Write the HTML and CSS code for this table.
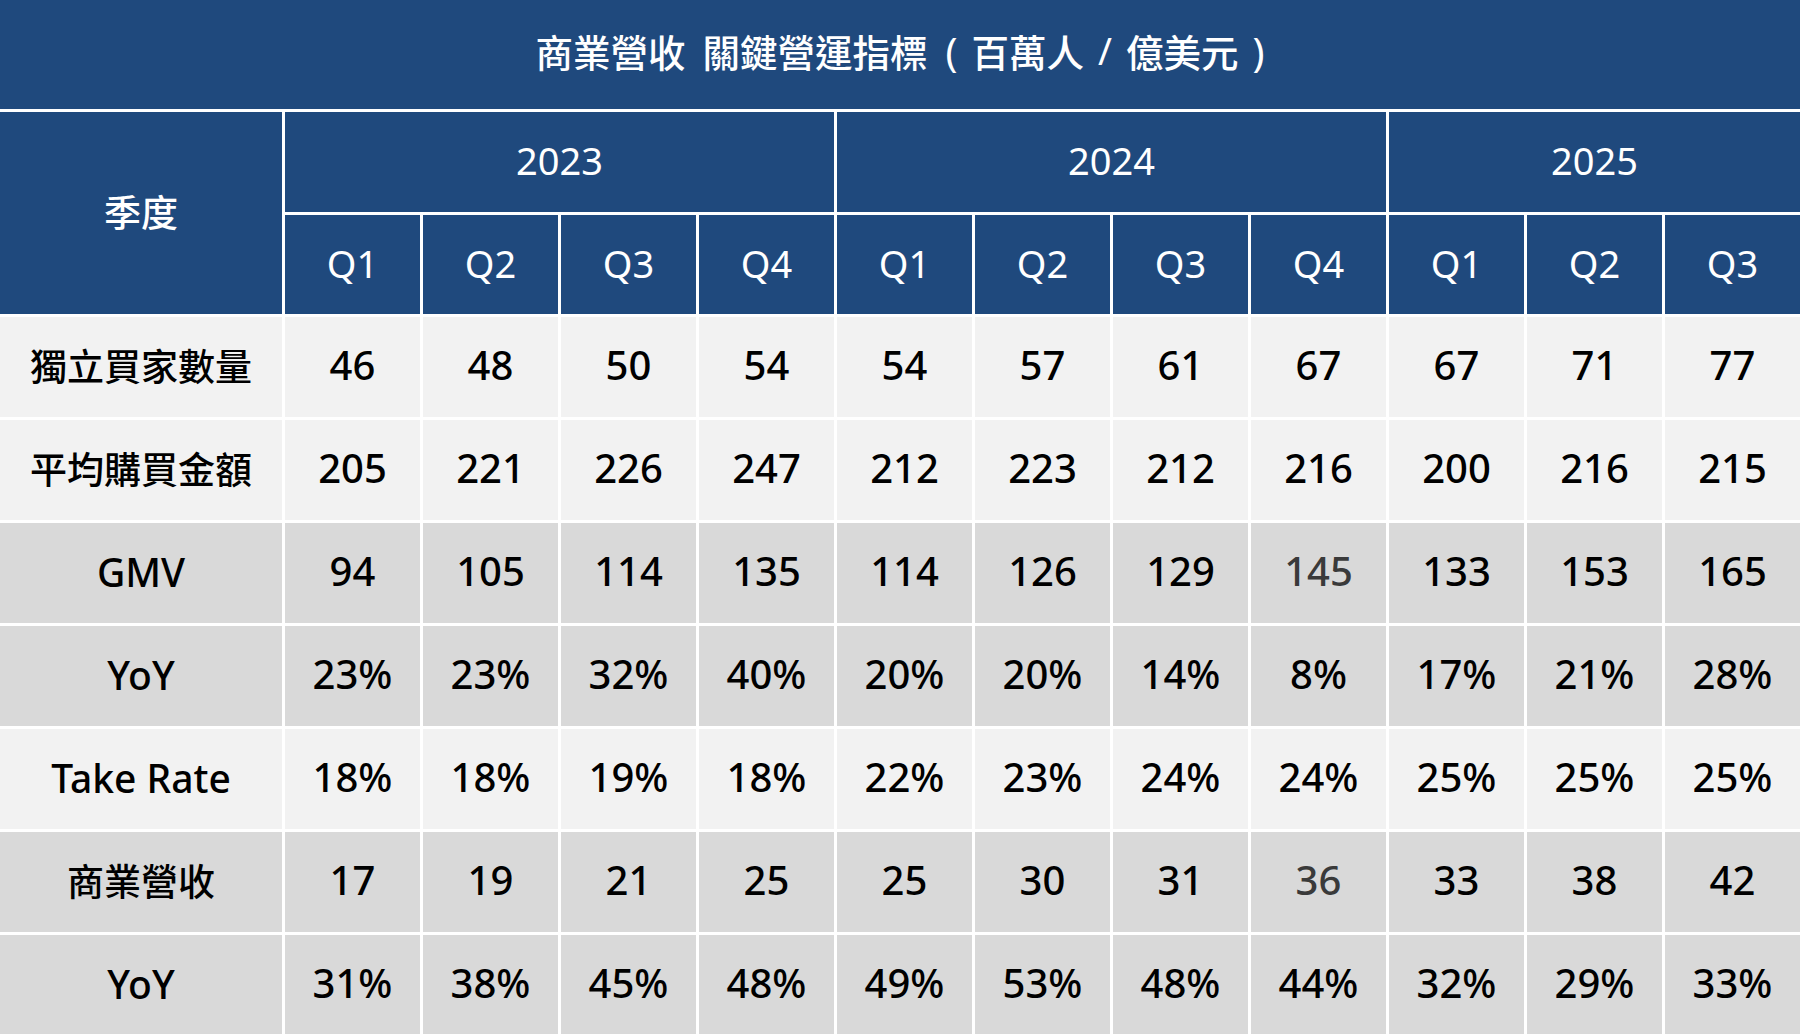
FILE: index.html
```html
<!DOCTYPE html>
<html lang="zh-Hant">
<head>
<meta charset="utf-8">
<title>商業營收 關鍵營運指標</title>
<link rel="stylesheet" href="styles.css">
</head>
<body>
<div class="sheet">
  <div class="cell title">商業營收&nbsp;&nbsp;關鍵營運指標<span class="paren open">(</span>百萬人<span class="slash">/</span>億美元<span class="paren close">)</span></div>

  <div class="cell head season cjk">季度</div>
  <div class="cell head year y4">2023</div>
  <div class="cell head year y4">2024</div>
  <div class="cell head year y3">2025</div>

  <div class="cell head">Q1</div><div class="cell head">Q2</div><div class="cell head">Q3</div><div class="cell head">Q4</div>
  <div class="cell head">Q1</div><div class="cell head">Q2</div><div class="cell head">Q3</div><div class="cell head">Q4</div>
  <div class="cell head">Q1</div><div class="cell head">Q2</div><div class="cell head">Q3</div>

  <div class="cell light label cjk">獨立買家數量</div>
  <div class="cell light">46</div><div class="cell light">48</div><div class="cell light">50</div><div class="cell light">54</div>
  <div class="cell light">54</div><div class="cell light">57</div><div class="cell light">61</div><div class="cell light">67</div>
  <div class="cell light">67</div><div class="cell light">71</div><div class="cell light">77</div>

  <div class="cell light label cjk">平均購買金額</div>
  <div class="cell light">205</div><div class="cell light">221</div><div class="cell light">226</div><div class="cell light">247</div>
  <div class="cell light">212</div><div class="cell light">223</div><div class="cell light">212</div><div class="cell light">216</div>
  <div class="cell light">200</div><div class="cell light">216</div><div class="cell light">215</div>

  <div class="cell dark label">GMV</div>
  <div class="cell dark">94</div><div class="cell dark">105</div><div class="cell dark">114</div><div class="cell dark">135</div>
  <div class="cell dark">114</div><div class="cell dark">126</div><div class="cell dark">129</div><div class="cell dark dim">145</div>
  <div class="cell dark">133</div><div class="cell dark">153</div><div class="cell dark">165</div>

  <div class="cell dark label">YoY</div>
  <div class="cell dark">23%</div><div class="cell dark">23%</div><div class="cell dark">32%</div><div class="cell dark">40%</div>
  <div class="cell dark">20%</div><div class="cell dark">20%</div><div class="cell dark">14%</div><div class="cell dark">8%</div>
  <div class="cell dark">17%</div><div class="cell dark">21%</div><div class="cell dark">28%</div>

  <div class="cell light label">Take Rate</div>
  <div class="cell light">18%</div><div class="cell light">18%</div><div class="cell light">19%</div><div class="cell light">18%</div>
  <div class="cell light">22%</div><div class="cell light">23%</div><div class="cell light">24%</div><div class="cell light">24%</div>
  <div class="cell light">25%</div><div class="cell light">25%</div><div class="cell light">25%</div>

  <div class="cell dark label cjk">商業營收</div>
  <div class="cell dark">17</div><div class="cell dark">19</div><div class="cell dark">21</div><div class="cell dark">25</div>
  <div class="cell dark">25</div><div class="cell dark">30</div><div class="cell dark">31</div><div class="cell dark dim">36</div>
  <div class="cell dark">33</div><div class="cell dark">38</div><div class="cell dark">42</div>

  <div class="cell dark label">YoY</div>
  <div class="cell dark">31%</div><div class="cell dark">38%</div><div class="cell dark">45%</div><div class="cell dark">48%</div>
  <div class="cell dark">49%</div><div class="cell dark">53%</div><div class="cell dark">48%</div><div class="cell dark">44%</div>
  <div class="cell dark">32%</div><div class="cell dark">29%</div><div class="cell dark">33%</div>
</div>
</body>
</html>
```

FILE: styles.css
```css
html, body {
  margin: 0;
  padding: 0;
  background: #ffffff;
}

body {
  font-family: "Noto Sans", "Noto Sans CJK TC", sans-serif;
  overflow: hidden;
}

.sheet {
  display: grid;
  grid-template-columns: 282px repeat(11, 1fr);
  grid-template-rows: 109px 100px 99px repeat(7, 100px);
  gap: 3px;
  background: #ffffff;
  width: 1800px;
}

.cell {
  display: flex;
  align-items: center;
  justify-content: center;
  font-size: 40px;
  font-weight: 500;
  color: #000000;
  line-height: 1;
  white-space: nowrap;
  padding-bottom: 4px;
  box-sizing: border-box;
}

.title {
  grid-column: 1 / -1;
  background: #1f497d;
  color: #ffffff;
  font-family: "Noto Sans CJK TC", "Noto Sans", sans-serif;
  font-size: 37.5px;
  font-weight: 500;
  padding-bottom: 8px;
}

.paren {
  font-family: "Noto Sans", sans-serif;
  font-weight: 400;
  font-size: 40px;
  position: relative;
  top: 1px;
}

.paren.open {
  margin: 0 14px 0 18px;
}

.paren.close {
  margin: 0 0 0 14px;
}

.slash {
  font-family: "Noto Sans", sans-serif;
  font-weight: 400;
  margin: 0 14px;
}

.head {
  background: #1f497d;
  color: #ffffff;
  font-size: 38px;
  font-weight: 400;
}

.season {
  grid-row: span 2;
}

.y4 {
  grid-column: span 4;
}

.y3 {
  grid-column: span 3;
}

.light {
  background: #f2f2f2;
}

.dark {
  background: #d9d9d9;
}

.label {
  font-size: 39px;
  font-weight: 500;
}

.cjk {
  font-family: "Noto Sans CJK TC", sans-serif;
  font-size: 37px;
  font-weight: 500;
}

.head.cjk {
  font-weight: 500;
}

.dim {
  color: #3a3a3a;
}
```
